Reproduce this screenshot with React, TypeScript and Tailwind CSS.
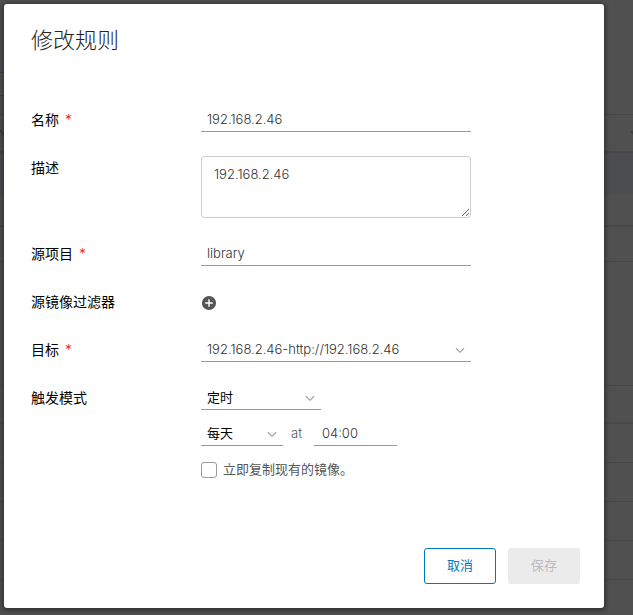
import { ReactNode } from "react";
import clsx from "clsx";

// table rows left visible behind the dialog, below the toolbar and the header
const backdropRows = [
  "h-[41px] bg-[#4b4d50]",
  "h-[33px] border-b-2",
  "h-[35px] border-b",
  "h-[124px] border-b",
  "h-[38px] border-b-2",
  "h-[39px] border-b",
  "h-[39px] border-b",
  "h-[39px] border-b",
  "h-[39px] border-b",
];

function Backdrop() {
  return (
    <div aria-hidden="true" className="col-start-1 row-start-1 overflow-hidden">
      <div className="h-[115px] border-b border-[#484848] pt-[72px]">
        <div className="h-6 w-16 border-y border-[#2f4a5a]" />
      </div>
      <div className="flex h-[38px] items-center justify-between border-b-2 border-[#484848]">
        <svg viewBox="0 0 4 8" className="h-2 w-1 fill-[#404040]">
          <path d="M0 0h1l3 5v3L0 3z" />
        </svg>
        <svg viewBox="0 0 3 4" className="h-1 w-[3px] fill-[#404040]">
          <path d="M0 0h3v4z" />
        </svg>
      </div>
      {backdropRows.map((row, index) => (
        <div key={index} className={clsx("border-[#484848]", row)} />
      ))}
    </div>
  );
}

interface FieldRowProps {
  label: string;
  htmlFor?: string;
  required?: boolean;
  children: ReactNode;
}

function FieldRow({ label, htmlFor, required, children }: FieldRowProps) {
  return (
    <div className="flex">
      <label htmlFor={htmlFor} className="w-[170px] shrink-0 text-sm leading-6 font-normal text-black">
        {label}
        {required && <span className="ml-1.5 font-light text-[#e62700]">*</span>}
      </label>
      <div className="flex min-w-0 flex-1 flex-col gap-3">{children}</div>
    </div>
  );
}

const underline = "h-6 border-b border-[#999] bg-transparent pb-0.5 text-[13px] leading-5 outline-none";

interface SelectFieldProps {
  id: string;
  options: string[];
  className: string;
  ariaLabel?: string;
}

function SelectField({ id, options, className, ariaLabel }: SelectFieldProps) {
  return (
    <div className={clsx("relative", className)}>
      <select id={id} aria-label={ariaLabel} className={clsx(underline, "block w-full appearance-none rounded-none px-1.5")}>
        {options.map((option) => (
          <option key={option}>{option}</option>
        ))}
      </select>
      <svg
        viewBox="0 0 10 6"
        className="pointer-events-none absolute top-2.5 right-1.5 h-1.5 w-2.5 fill-none stroke-[#999]"
      >
        <path d="M1 0.3 5 4.3 9 0.3" strokeWidth="1.1" />
      </svg>
    </div>
  );
}

export default function App() {
  return (
    <div className="grid min-h-screen bg-[#505050] font-[Inter,'Noto_Sans_CJK_SC',sans-serif] font-light text-[#313131]">
      <Backdrop />

      <div
        role="dialog"
        aria-labelledby="dialog-title"
        className="relative col-start-1 row-start-1 m-1 w-[calc(100%-33px)] max-w-[600px] self-start rounded-[3px] bg-white p-6 shadow-[0_1px_4px_2px_rgba(0,0,0,0.35)]"
      >
        <h3 id="dialog-title" className="pl-[3px] text-[22px] leading-6 font-light text-[#222]">
          修改规则
        </h3>

        <form className="mt-14 flex flex-col gap-6 pl-[3px]">
          <FieldRow label="名称" htmlFor="name" required>
            <input id="name" defaultValue="192.168.2.46" className={clsx(underline, "w-full max-w-[270px] px-1.5")} />
          </FieldRow>
          <FieldRow label="描述" htmlFor="description">
            <textarea
              id="description"
              defaultValue="192.168.2.46"
              className="block h-[62px] w-full max-w-[270px] rounded-[3px] border border-[#ccc] px-3 py-1.5 text-[13px] leading-[22px] outline-none"
            />
          </FieldRow>
          <FieldRow label="源项目" htmlFor="project" required>
            <input id="project" defaultValue="library" className={clsx(underline, "w-full max-w-[270px] px-1.5")} />
          </FieldRow>
          <FieldRow label="源镜像过滤器">
            <button type="button" aria-label="源镜像过滤器" className="flex h-6 w-4 items-end pb-[3px]">
              <svg viewBox="0 0 16 16" className="size-4">
                <circle cx="8" cy="8" r="7.1" fill="#565656" />
                <path d="M8 4.2v7.6M4.2 8h7.6" stroke="#fff" strokeWidth="1.4" />
              </svg>
            </button>
          </FieldRow>
          <FieldRow label="目标" htmlFor="target" required>
            <SelectField id="target" options={["192.168.2.46-http://192.168.2.46"]} className="w-full max-w-[270px]" />
          </FieldRow>
          <FieldRow label="触发模式" htmlFor="trigger">
            <SelectField id="trigger" options={["定时"]} className="w-[120px] font-normal text-black" />
            <div className="flex text-[13px] leading-[22px]">
              <SelectField id="period" ariaLabel="周期" options={["每天"]} className="w-[82px] font-normal text-black" />
              <label htmlFor="time" className="w-[31px] pl-2 text-[#565656]">
                at
              </label>
              <input id="time" defaultValue="04:00" className={clsx(underline, "w-[83px] px-2")} />
            </div>
            <label className="flex h-6 items-center gap-1.5 text-[13px] font-normal text-[#565656]">
              <input
                type="checkbox"
                className="size-4 appearance-none rounded-[3px] border border-[#9a9a9a] checked:bg-[#0079b8]"
              />
              立即复制现有的镜像。
            </label>
          </FieldRow>
        </form>

        <div className="mt-[66px] flex justify-end gap-3 text-[13px] font-normal">
          <button type="button" className="h-9 w-[72px] rounded-[3px] border border-[#0079b8] text-[#0079b8]">
            取消
          </button>
          <button type="button" disabled className="h-9 w-[72px] rounded-[3px] bg-[#ebebeb] text-[#bbb]">
            保存
          </button>
        </div>
      </div>
    </div>
  );
}
